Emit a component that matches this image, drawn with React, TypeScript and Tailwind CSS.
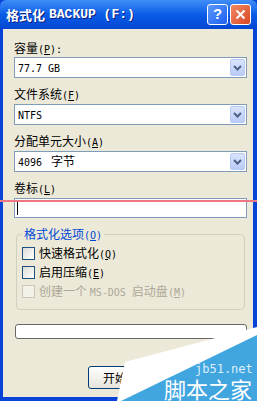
import React from "react";

const cjk = "font-['Noto_Sans_CJK_SC',sans-serif]";
const mono = "font-['DejaVu_Sans_Mono',monospace]";

function A({ children }: { children: React.ReactNode }) {
  return <span className={`${mono} text-[10px]`}>{children}</span>;
}

function Label({ text, k, colon }: { text: string; k: string; colon?: boolean }) {
  return (
    <div className={`${cjk} text-[12px] leading-[14px] h-[14px] text-black whitespace-nowrap`}>
      {text}
      <A>
        (<span className="underline">{k}</span>){colon ? ":" : ""}
      </A>
    </div>
  );
}

function Combo({ children }: { children: React.ReactNode }) {
  return (
    <div className="h-[21px] border border-[#7f9db9] bg-white flex items-center pl-[2px] pr-[1px]">
      <div className="flex-1 text-[12px] text-black whitespace-nowrap">{children}</div>
      <div className="w-[15px] h-[17px] rounded-[2px] border border-[#b8cbf5] bg-gradient-to-b from-[#dae4fc] to-[#b9cbf6] flex items-center justify-center">
        <svg width="9" height="6" viewBox="0 0 9 6">
          <path d="M1 1 L4.5 4.5 L8 1" stroke="#4d6185" strokeWidth="2" fill="none" />
        </svg>
      </div>
    </div>
  );
}

function Check({ children, disabled }: { children: React.ReactNode; disabled?: boolean }) {
  return (
    <div className="flex items-center h-[19px]">
      <div
        className={`w-[13px] h-[13px] border ${
          disabled ? "border-[#cac8bb] bg-[#f3f1e8]" : "border-[#1c5180] bg-gradient-to-br from-[#dcdcd7] to-white"
        }`}
      />
      <div className={`${cjk} ml-[4px] text-[12px] leading-[14px] whitespace-nowrap ${disabled ? "text-[#aca899]" : "text-black"}`}>
        {children}
      </div>
    </div>
  );
}

export default function App() {
  return (
    <div className="relative w-[257px] h-[401px] overflow-hidden flex flex-col bg-[#0842d6]">
      {/* Title bar */}
      <div className="h-[29px] flex items-center pl-[6px] pr-[6px] bg-gradient-to-b from-[#3e8df7] via-[#0a5ce8] to-[#0547d2] rounded-t-[6px]">
        <div className="flex-1 flex items-center text-white font-bold whitespace-nowrap [text-shadow:1px_1px_0_#0a1e80]">
          <span className={`${cjk} text-[13px]`}>格式化</span>
          <span className="font-['Liberation_Mono',monospace] text-[13px] ml-[4px]">BACKUP (F:)</span>
        </div>
        <div className="flex gap-[2px]">
          <div className="w-[21px] h-[21px] rounded-[3px] border border-white bg-gradient-to-br from-[#5c98fb] to-[#1d5ef0] flex items-center justify-center text-white font-bold text-[15px] font-['Liberation_Sans',sans-serif]">
            ?
          </div>
          <div className="w-[21px] h-[21px] rounded-[3px] border border-white bg-gradient-to-br from-[#f08a64] to-[#d9441f] flex items-center justify-center">
            <svg width="11" height="11" viewBox="0 0 11 11">
              <path d="M1.5 1.5 L9.5 9.5 M9.5 1.5 L1.5 9.5" stroke="white" strokeWidth="2" />
            </svg>
          </div>
        </div>
      </div>

      {/* Body */}
      <div className="flex-1 ml-[3px] mr-[4px] mb-[4px] bg-[#ece9d8] pl-[11px] pr-[6px] pt-[12px] flex flex-col">
        <Label text="容量" k="P" colon />
        <div className="mt-[2px]">
          <Combo>
            <span className={`${mono} text-[10px] pl-[1px]`}>77.7 GB</span>
          </Combo>
        </div>
        <div className="mt-[9px]">
          <Label text="文件系统" k="F" />
        </div>
        <div className="mt-[3px]">
          <Combo>
            <span className={`${mono} text-[10px] pl-[1px]`}>NTFS</span>
          </Combo>
        </div>
        <div className="mt-[9px]">
          <Label text="分配单元大小" k="A" />
        </div>
        <div className="mt-[3px]">
          <Combo>
            <span className={`${mono} text-[10px] pl-[1px]`}>4096 </span>
            <span className={`${cjk} text-[12px] ml-[3px]`}>字节</span>
          </Combo>
        </div>
        <div className="mt-[9px]">
          <Label text="卷标" k="L" />
        </div>
        <div className="mt-[3px] h-[20px] border border-[#7f9db9] bg-white flex items-center pl-[2px]">
          <div className="w-[1px] h-[13px] bg-black" />
        </div>

        {/* Group box */}
        <div className="relative mt-[16px] mx-[2px] h-[76px] border border-[#d0d0bf] rounded-[4px] pt-[9px] pl-[5px]">
          <div className={`absolute -top-[8px] left-[5px] px-[2px] bg-[#ece9d8] ${cjk} text-[12px] leading-[14px] text-[#0046d5] whitespace-nowrap`}>
            格式化选项
            <A>
              (<span className="underline">O</span>)
            </A>
          </div>
          <Check>
            快速格式化
            <A>
              (<span className="underline">Q</span>)
            </A>
          </Check>
          <Check>
            启用压缩
            <A>
              (<span className="underline">E</span>)
            </A>
          </Check>
          <Check disabled>
            创建一个 <A>MS-DOS </A>启动盘
            <A>
              (<span className="underline">M</span>)
            </A>
          </Check>
        </div>

        {/* Progress bar */}
        <div className="mt-[14px] ml-[1px] h-[15px] border border-[#686868] rounded-[3px] bg-white" />

        {/* Button */}
        <div className="mt-[27px] ml-[74px] w-[75px] h-[23px] rounded-[3px] border border-[#003c74] bg-gradient-to-b from-white to-[#e6e4dc] flex items-center pl-[14px]">
          <span className={`${cjk} text-[12px] text-black`}>开始</span>
        </div>
      </div>

      {/* Red annotation line */}
      <div className="absolute left-0 right-0 top-[200px] h-[2px] bg-[#ee7783]" />

      {/* Watermark */}
      <svg className="absolute left-0 top-0" width="257" height="401" viewBox="0 0 257 401">
        <polygon points="117,401 125,362 257,327 257,401" fill="#ffffff" />
        <polygon points="121,401 257,335 257,401" fill="#41a6df" />
      </svg>
      <div className="absolute left-[195px] top-[362px] text-[12px] leading-[14px] text-[#dceefa] font-['DejaVu_Sans_Mono',monospace] whitespace-nowrap">
        jb51.net
      </div>
      <div className={`absolute left-[164px] top-[377px] text-[22px] leading-[22px] text-white ${cjk} whitespace-nowrap`}>
        脚本之家
      </div>
    </div>
  );
}
